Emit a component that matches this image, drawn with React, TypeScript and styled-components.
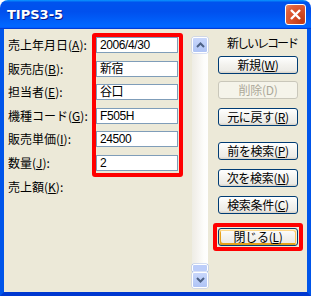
import React from "react";
import styled, { createGlobalStyle, css } from "styled-components";

const GlobalStyle = createGlobalStyle`
  *, *::before, *::after { box-sizing: border-box; }
  html, body { margin: 0; padding: 0; background: #ffffff; }
  body { font-family: "Noto Sans CJK JP", "Liberation Sans", sans-serif; }
`;

const Window = styled.div`
  width: 311px;
  height: 296px;
  display: flex;
  flex-direction: column;
`;

const TitleBar = styled.div`
  height: 29px;
  flex: none;
  border-radius: 8px 8px 0 0;
  background: linear-gradient(
    180deg,
    #0997ff,
    #0053ee 8%,
    #0050ee 40%,
    #0066ff 88%,
    #0066ff 93%,
    #005bff 95%,
    #003dd7 96%,
    #003dd7
  );
  display: flex;
  align-items: center;
  justify-content: space-between;
  padding: 0 5px 0 7px;
`;

const Title = styled.span`
  color: #ffffff;
  font-family: "DejaVu Sans", "Liberation Sans", sans-serif;
  font-weight: bold;
  font-size: 13px;
  text-shadow: 1px 1px #0a1883;
`;

const CloseButton = styled.div`
  width: 21px;
  height: 21px;
  border: 1px solid #ffffff;
  border-radius: 3px;
  background: radial-gradient(circle at 85% 85%, #c13a14 0%, #d9512c 50%, #e0603a 75%, #ea8a6c 100%);
  display: flex;
  align-items: center;
  justify-content: center;
`;

const Body = styled.div`
  flex: 1;
  display: flex;
  background: #ece9d8;
  border-style: solid;
  border-width: 0 4px 4px 4px;
  border-color: #0055ea #0055ea #0038d0 #0055ea;
  padding-left: 4px;
`;

const Form = styled.div`
  display: flex;
  align-items: flex-start;
  margin-top: 4px;
`;

const LabelColumn = styled.div`
  width: 84px;
  display: flex;
  flex-direction: column;
  gap: 7.6px;
  padding-top: 4px;
`;

const FieldLabel = styled.div`
  height: 16px;
  font-size: 12px;
  line-height: 16px;
  color: #000000;
  white-space: nowrap;
`;

const Highlight = styled.div`
  border: 4px solid #ff0000;
  border-radius: 3px;
`;

const InputFrame = styled(Highlight)`
  width: 91px;
  display: flex;
  flex-direction: column;
  gap: 7.6px;
  padding: 0 1px 2px 0;
`;

const TextBox = styled.div`
  height: 16px;
  border: 1px solid #7f9db9;
  background: #ffffff;
  font-family: "Liberation Sans", "Noto Sans CJK JP", sans-serif;
  font-size: 12px;
  line-height: 14px;
  padding-left: 3px;
  color: #000000;
  letter-spacing: -0.4px;
  white-space: nowrap;
  overflow: hidden;
`;

const ScrollBar = styled.div`
  width: 16px;
  margin: 8px 0 4px 9px;
  display: flex;
  flex-direction: column;
  background: linear-gradient(90deg, #eeede5, #f3f1ec 25%, #fdfdfb 75%, #fefefe);
`;

const ScrollButton = styled.div`
  height: 16px;
  flex: none;
  border: 1px solid #ffffff;
  border-radius: 2px;
  background: linear-gradient(180deg, #c8d6fb, #b9ccf8 60%, #b0c4f5);
  box-shadow: 0 0 0 0.5px #b5c6ef;
  display: flex;
  align-items: center;
  justify-content: center;
`;

const Track = styled.div`
  flex: 1;
`;

const Thumb = styled.div`
  height: 8px;
  flex: none;
  border: 1px solid #ffffff;
  border-radius: 2px;
  background: #bccdf9;
  box-shadow: 0 0 0 0.5px #a9bde9;
`;

const RightPane = styled.div`
  width: 80px;
  margin-left: 10px;
  padding-top: 8px;
  display: flex;
  flex-direction: column;
`;

const Heading = styled.div`
  font-size: 12px;
  line-height: 12px;
  height: 12px;
  text-align: right;
  letter-spacing: -2px;
  margin-right: 1px;
  color: #000000;
  white-space: nowrap;
`;

const XPButton = styled.div<{ $mt: number; $disabled?: boolean; $default?: boolean }>`
  margin-top: ${(p) => p.$mt}px;
  width: 80px;
  height: 18px;
  flex: none;
  border: 1px solid #003c74;
  border-radius: 3px;
  background: linear-gradient(180deg, #ffffff, #f3f2ee 50%, #ecebe6 86%, #d6d0c5);
  display: flex;
  align-items: center;
  justify-content: center;
  font-size: 12px;
  line-height: 14px;
  letter-spacing: -0.3px;
  color: #000000;
  white-space: nowrap;
  ${(p) =>
    p.$disabled &&
    css`
      border-color: #c9c7ba;
      background: #f5f4ea;
      color: #aca899;
    `}
  ${(p) =>
    p.$default &&
    css`
      box-shadow: inset -1px 1px #fff0cf, inset 1px 2px #fdd889, inset -2px 2px #fbc761,
        inset 2px -2px #e5a01a;
    `}
`;

const CloseFrame = styled(Highlight)<{ $mt: number }>`
  margin-top: ${(p) => p.$mt}px;
  margin-left: -5px;
  width: 90px;
  padding: 1px;
`;

const Chevron = ({ up }: { up: boolean }) => (
  <svg width="9" height="6" viewBox="0 0 9 6">
    <path
      d={up ? "M1 5 L4.5 1.5 L8 5" : "M1 1 L4.5 4.5 L8 1"}
      fill="none"
      stroke="#4d6185"
      strokeWidth="2"
    />
  </svg>
);

const labels: [string, string][] = [
  ["売上年月日", "A"],
  ["販売店", "B"],
  ["担当者", "E"],
  ["機種コード", "G"],
  ["販売単価", "I"],
  ["数量", "J"],
  ["売上額", "K"],
];

const values = ["2006/4/30", "新宿", "谷口", "F505H", "24500", "2"];

export default function App() {
  return (
    <>
      <GlobalStyle />
      <Window>
        <TitleBar>
          <Title>TIPS3-5</Title>
          <CloseButton>
            <svg width="13" height="13" viewBox="0 0 13 13">
              <path d="M2 2 L11 11 M11 2 L2 11" stroke="#ffffff" strokeWidth="2.4" />
            </svg>
          </CloseButton>
        </TitleBar>
        <Body>
          <Form>
            <LabelColumn>
              {labels.map(([text, key]) => (
                <FieldLabel key={key}>
                  {text}(<u>{key}</u>):
                </FieldLabel>
              ))}
            </LabelColumn>
            <InputFrame>
              {values.map((v) => (
                <TextBox key={v}>{v}</TextBox>
              ))}
            </InputFrame>
          </Form>
          <ScrollBar>
            <ScrollButton>
              <Chevron up />
            </ScrollButton>
            <Track />
            <Thumb />
            <ScrollButton>
              <Chevron up={false} />
            </ScrollButton>
          </ScrollBar>
          <RightPane>
            <Heading>新しいレコード</Heading>
            <XPButton $mt={7}>
              新規(<u>W</u>)
            </XPButton>
            <XPButton $mt={7} $disabled>
              削除(D)
            </XPButton>
            <XPButton $mt={9}>
              元に戻す(<u>R</u>)
            </XPButton>
            <XPButton $mt={16}>
              前を検索(<u>P</u>)
            </XPButton>
            <XPButton $mt={9}>
              次を検索(<u>N</u>)
            </XPButton>
            <XPButton $mt={9}>
              検索条件(<u>C</u>)
            </XPButton>
            <CloseFrame $mt={9}>
              <XPButton $mt={0} $default>
                閉じる(<u>L</u>)
              </XPButton>
            </CloseFrame>
          </RightPane>
        </Body>
      </Window>
    </>
  );
}
